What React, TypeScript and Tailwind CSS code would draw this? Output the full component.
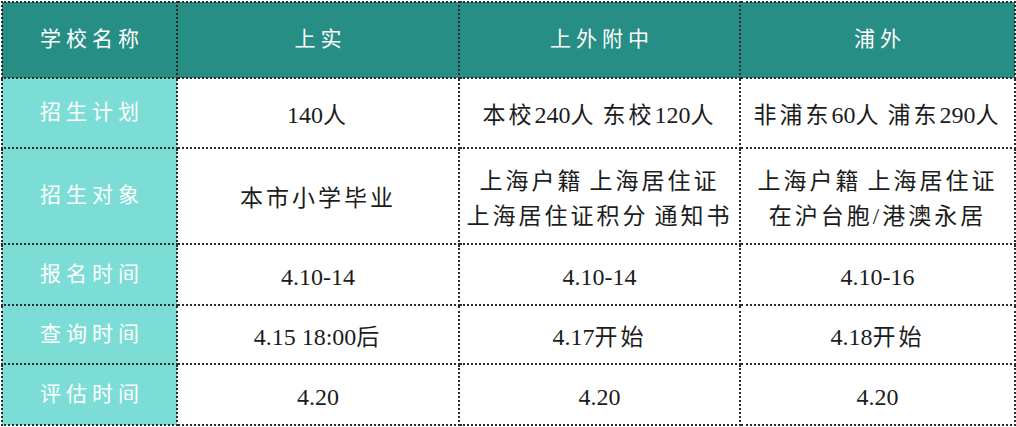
const header = ['学校名称', '上实', '上外附中', '浦外']

const rows: { label: string; cells: string[][]; h: string }[] = [
  { label: '招生计划', cells: [['140人'], ['本校240人 东校120人'], ['非浦东60人 浦东290人']], h: 'h-[70px]' },
  {
    label: '招生对象',
    cells: [['本市小学毕业'], ['上海户籍 上海居住证', '上海居住证积分 通知书'], ['上海户籍 上海居住证', '在沪台胞/港澳永居']],
    h: 'h-[96px]',
  },
  { label: '报名时间', cells: [['4.10-14'], ['4.10-14'], ['4.10-16']], h: 'h-[61px]' },
  { label: '查询时间', cells: [['4.15 18:00后'], ['4.17开始'], ['4.18开始']], h: 'h-[59px]' },
  { label: '评估时间', cells: [['4.20'], ['4.20'], ['4.20']], h: 'h-[61px]' },
]

const font = { fontFamily: '"Liberation Serif", "Noto Sans CJK SC", serif' }

// 中文字加字距，数字不加
function Line({ text }: { text: string }) {
  const parts = text.match(/[\u4e00-\u9fff/]+|[^\u4e00-\u9fff/]+/g) || []
  return (
    <div>
      {parts.map((p, i) =>
        /[\u4e00-\u9fff]/.test(p) ? (
          <span key={i} className="tracking-[3px]">
            {p}
          </span>
        ) : (
          <span key={i} className="text-[24px]">
            {p}
          </span>
        ),
      )}
    </div>
  )
}

export default function App() {
  return (
    <div className="w-[1016px] h-[427px] bg-white pt-px pl-px" style={font}>
      <table className="w-[1013px] table-fixed border-collapse">
        <colgroup>
          <col className="w-[175px]" />
          <col className="w-[282px]" />
          <col className="w-[281px]" />
          <col className="w-[275px]" />
        </colgroup>
        <thead>
          <tr className="h-[76px] bg-[#268e84]">
            {header.map((t) => (
              <th
                key={t}
                className="border-2 border-dotted border-[#2b2b2b] pl-[5px] text-center align-middle text-[21px] font-normal tracking-[5px] text-white"
              >
                {t}
              </th>
            ))}
          </tr>
        </thead>
        <tbody>
          {rows.map((r) => (
            <tr key={r.label} className={r.h}>
              <td className="border-2 border-dotted border-[#2b2b2b] bg-[#7bddd6] pl-[5px] text-center align-middle text-[21px] tracking-[5px] text-white">
                {r.label}
              </td>
              {r.cells.map((lines, i) => (
                <td
                  key={i}
                  className="border-2 border-dotted border-[#2b2b2b] pt-[5px] text-center align-middle text-[23px] leading-[35px] text-[#1c1c1c]"
                >
                  {lines.map((l) => (
                    <Line key={l} text={l} />
                  ))}
                </td>
              ))}
            </tr>
          ))}
        </tbody>
      </table>
    </div>
  )
}
